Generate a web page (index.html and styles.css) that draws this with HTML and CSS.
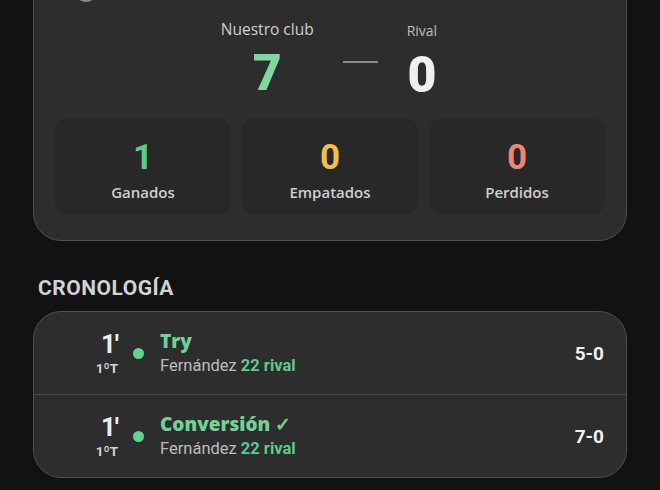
FILE: index.html
```html
<!DOCTYPE html>
<html lang="es">
<head>
<meta charset="utf-8">
<link rel="stylesheet" href="styles.css">
</head>
<body>
<main class="page">
  <section class="card summary">
    <div class="card-head"><span class="head-icon"></span></div>
    <div class="scoreboard">
      <div class="team">
        <div class="team-name">Nuestro club</div>
        <div class="team-score ours">7</div>
      </div>
      <div class="dash"></div>
      <div class="team">
        <div class="team-name rival">Rival</div>
        <div class="team-score theirs">0</div>
      </div>
    </div>
    <div class="stats">
      <div class="stat"><div class="stat-num won">1</div><div class="stat-label">Ganados</div></div>
      <div class="stat"><div class="stat-num draw">0</div><div class="stat-label">Empatados</div></div>
      <div class="stat"><div class="stat-num lost">0</div><div class="stat-label">Perdidos</div></div>
    </div>
  </section>

  <h2 class="section-title">CRONOLOGÍA</h2>

  <section class="card timeline">
    <div class="event">
      <div class="minute"><div class="min">1'</div><div class="half">1ºT</div></div>
      <span class="dot"></span>
      <div class="event-body">
        <div class="event-title">Try</div>
        <div class="event-sub">Fernández <span class="zone">22 rival</span></div>
      </div>
      <div class="event-score">5-0</div>
    </div>
    <div class="event">
      <div class="minute"><div class="min">1'</div><div class="half">1ºT</div></div>
      <span class="dot"></span>
      <div class="event-body">
        <div class="event-title">Conversión ✓</div>
        <div class="event-sub">Fernández <span class="zone">22 rival</span></div>
      </div>
      <div class="event-score">7-0</div>
    </div>
  </section>
</main>
</body>
</html>
```

FILE: styles.css
```css
html, body {
  margin: 0;
  padding: 0;
  background: #121212;
  height: 100%;
  overflow: hidden;
}
body {
  font-family: "Open Sans", "Noto Sans", sans-serif;
  color: #e6e6e6;
}
.page {
  padding: 0 33px;
}
.card {
  background: #2d2d2d;
  border: 1px solid #4e4e4e;
  border-radius: 28px;
}
.summary {
  margin-top: -28px;
  padding: 14px 21px 25px;
}
.card-head {
  height: 30px;
  display: flex;
  align-items: flex-start;
}
.head-icon {
  width: 22px;
  height: 22px;
  margin-left: 20px;
  margin-top: -7px;
  border-radius: 50%;
  border: 2px solid #8a8a8a;
  box-sizing: border-box;
}
.scoreboard {
  display: flex;
  justify-content: center;
  align-items: center;
  gap: 29px;
  padding-right: 2px;
}
.team {
  display: flex;
  flex-direction: column;
  align-items: center;
}
.team-name {
  font-size: 15.5px;
  color: #cfcfcf;
  line-height: 20px;
}
.team-name.rival {
  font-size: 14px;
  color: #bdbdbd;
  margin-top: 4px;
}
.team-score {
  font-family: "Roboto", sans-serif;
  font-weight: 900;
  font-size: 50px;
  line-height: 56px;
  margin-top: 6px;
}
.ours { color: #7fd89d; }
.theirs { color: #efefef; }
.dash {
  width: 35px;
  height: 2px;
  background: #8c8c8c;
  margin-top: 4px;
}
.stats {
  display: grid;
  grid-template-columns: 1fr 1fr 1fr;
  gap: 11px;
  margin-top: 15px;
}
.stat {
  background: #282828;
  border-radius: 14px;
  height: 97px;
  display: flex;
  flex-direction: column;
  align-items: center;
  justify-content: center;
  padding-top: 8px;
  box-sizing: border-box;
}
.stat-num {
  font-family: "Roboto", sans-serif;
  font-weight: 700;
  font-size: 35px;
  line-height: 38px;
}
.won { color: #58cf86; }
.draw { color: #f3bf45; }
.lost { color: #ef8575; }
.stat-label {
  font-size: 15px;
  color: #cfcfcf;
  margin-top: 5px;
  font-weight: 600;
}
.section-title {
  margin: 34px 0 0 5px;
  font-family: "Roboto", sans-serif;
  font-weight: 700;
  font-size: 21px;
  letter-spacing: 0.5px;
  color: #d2d2d2;
  line-height: 26px;
}
.timeline {
  margin-top: 10px;
  overflow: hidden;
}
.event {
  display: flex;
  align-items: center;
  height: 82px;
  padding: 0 22px 0 24px;
}
.event + .event {
  border-top: 1px solid #4a4a4a;
}
.minute {
  width: 60px;
  display: flex;
  flex-direction: column;
  align-items: flex-end;
}
.min {
  font-family: "Roboto", sans-serif;
  font-weight: 700;
  font-size: 26px;
  line-height: 28px;
  color: #ededed;
  letter-spacing: -1px;
}
.half {
  font-family: "Roboto", sans-serif;
  font-weight: 700;
  font-size: 13.5px;
  color: #d6d6d6;
  margin-top: 2px;
}
.dot {
  width: 11px;
  height: 11px;
  border-radius: 50%;
  background: #5dd58b;
  margin: 0 16px 0 15px;
}
.event-body {
  flex: 1;
}
.event-title {
  font-family: "Open Sans", sans-serif;
  font-weight: 800;
  font-size: 19px;
  color: #6fd394;
  line-height: 24px;
}
.event-sub {
  font-family: "Roboto", sans-serif;
  font-size: 16.5px;
  color: #bdbdbd;
  line-height: 22px;
  margin-top: 2px;
}
.zone {
  color: #5ccc8b;
  font-weight: 700;
}
.event-score {
  font-family: "Roboto", sans-serif;
  font-weight: 700;
  font-size: 19px;
  color: #f0f0f0;
}
```
